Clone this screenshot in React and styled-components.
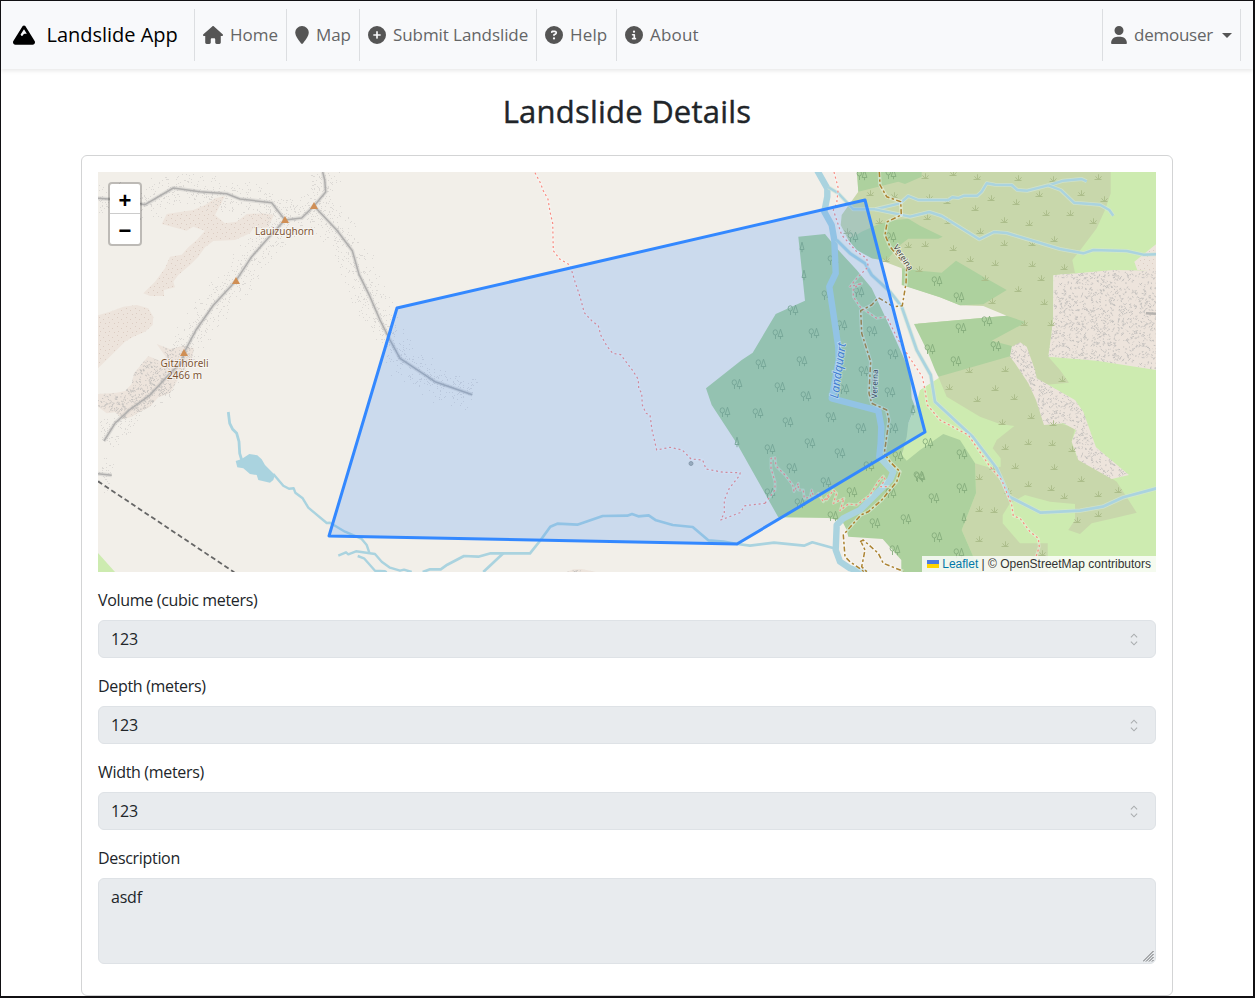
import React from "react";
import styled, { createGlobalStyle, css } from "styled-components";
import {
  FaMountain,
  FaHouse,
  FaLocationPin,
  FaCirclePlus,
  FaCircleQuestion,
  FaCircleInfo,
  FaUser,
} from "react-icons/fa6";

const GlobalStyle = createGlobalStyle`
  * { box-sizing: border-box; }
  body {
    margin: 0;
    background: #fff;
    color: #212529;
    font-family: "Open Sans", "Noto Sans", sans-serif;
    font-size: 16px;
    line-height: 24px;
  }
`;

const Page = styled.div`
  width: 1255px;
  height: 998px;
  overflow: hidden;
  border: solid #111013;
  border-width: 1px 2px 2px 1px;
  background: #fff;
`;

const Navbar = styled.nav`
  display: flex;
  align-items: center;
  height: 68px;
  padding: 0 12px 0 12px;
  background: #f8f9fb;
  box-shadow: 0 2px 4px rgba(0, 0, 0, 0.09);
`;

const Brand = styled.div`
  display: flex;
  align-items: center;
  width: 181px;
  height: 52px;
  color: #000;
  font-size: 20px;
  letter-spacing: -0.02px;
  white-space: nowrap;
  svg { width: 22px; height: 22px; margin-right: 11.5px; flex: none; }
`;

const NavItem = styled.div`
  display: flex;
  align-items: center;
  width: ${(p) => p.$width}px;
  height: 52px;
  padding-left: 7.5px;
  border-left: 1px solid #dcdee1;
  color: #646566;
  font-size: 17px;
  letter-spacing: ${(p) => p.$spacing || 0}px;
  white-space: nowrap;
  ${(p) => p.$last && css`
    margin-left: auto;
    border-right: 1px solid #dcdee1;
  `}
  svg {
    flex: none;
    height: 18px;
    width: ${(p) => p.$icon}px;
    margin-right: 7.5px;
    color: #555;
  }
`;

const Caret = styled.span`
  margin-left: 9px;
  border: 5px solid transparent;
  border-top-color: #555;
  border-bottom: 0;
`;

const Title = styled.h1`
  margin: 23px 0 24px;
  height: 39px;
  line-height: 39px;
  font-size: 31px;
  font-weight: 500;
  text-align: center;
  letter-spacing: 0.22px;
  -webkit-text-stroke: 0.4px currentColor;
`;

const Card = styled.main`
  width: 1092px;
  margin: 0 0 0 80px;
  padding: 16px 16px 15px;
  border: 1px solid #d3d4d5;
  border-radius: 6px;
`;

const MapBox = styled.section`
  position: relative;
  width: 1058px;
  height: 400px;
  margin-bottom: 16px;
  background: #f2efe9;
  overflow: hidden;
  > svg { display: block; }
`;

const ZoomControl = styled.div`
  position: absolute;
  left: 10px;
  top: 10px;
  border: 2px solid rgba(0, 0, 0, 0.22);
  border-radius: 4px;
  background: #fff;
  background-clip: padding-box;
`;

const ZoomButton = styled.div`
  display: flex;
  align-items: center;
  justify-content: center;
  width: 30px;
  height: 30px;
  padding-top: 3px;
  border-bottom: ${(p) => (p.$divided ? "1px solid #ccc" : "0")};
  color: #000;
  font: bold 22px/27px "Liberation Sans", sans-serif;
`;

const Attribution = styled.div`
  position: absolute;
  right: 0;
  bottom: 0;
  display: flex;
  align-items: center;
  height: 16px;
  padding: 0 5px;
  background: rgba(255, 255, 255, 0.8);
  color: #333;
  font: 12px/16px "Liberation Sans", sans-serif;
  white-space: pre;
  svg { margin-right: 3px; }
  span { color: #0078a8; }
`;

const Field = styled.div`
  margin-bottom: 16px;
`;

const Label = styled.label`
  display: block;
  margin-bottom: 8px;
  letter-spacing: -0.32px;
`;

const Control = styled.div`
  position: relative;
  display: flex;
  justify-content: space-between;
  align-items: ${(p) => (p.$tall ? "flex-start" : "center")};
  height: ${(p) => (p.$tall ? 86 : 38)}px;
  padding: 6px 17px 6px 12px;
  border: 1px solid #dee2e6;
  border-radius: 6px;
  background: #e8ebee;
  letter-spacing: -0.2px;
`;

const Grip = styled.svg`
  position: absolute;
  right: 1px;
  bottom: 1px;
`;

/* Deterministic noise for terrain textures */
function noise(seed) {
  let s = seed;
  return () => {
    s = (s * 16807) % 2147483647;
    return s / 2147483647;
  };
}

const WEST = [-8, -12];
const WEST_LOW = [-8, 188];
const MID = [292, -12];
const MID_LOW = [292, 188];
const VALLEY = [592, -12];
const VALLEY_LOW = [592, 188];
const EAST = [822, -12];
const EAST_LOW = [822, 188];

const parse = (sheet, text) =>
  text.trim().split(/\s+/).map((pair) => {
    const [x, y] = pair.split(",").map(Number);
    return [sheet[0] + x / 3, sheet[1] + y / 3];
  });
const pts = (sheet, text) => parse(sheet, text).map((p) => p.map((v) => v.toFixed(1)).join(",")).join(" ");

const Area = ({ s, p, fill }) => <polygon points={pts(s, p)} fill={fill} />;
const Line = ({ s, p, color, w, dash, o }) => (
  <polyline points={pts(s, p)} fill="none" stroke={color} strokeWidth={w} strokeDasharray={dash} opacity={o} strokeLinejoin="round" />
);
const Water = ({ s, p, w = 2.4, halo }) => (
  <>
    {halo && <Line s={s} p={p} color="#d3e6d6" w={w + 1.6} o={0.7} />}
    <Line s={s} p={p} color="#aad3df" w={w} />
  </>
);
const Footpath = ({ s, p }) => (
  <>
    <Line s={s} p={p} color="#fff" w={2.8} o={0.32} />
    <Line s={s} p={p} color="#f98a80" w={1.2} dash="2 2.8" />
  </>
);
const Track = ({ s, p }) => (
  <>
    <Line s={s} p={p} color="#fff" w={3.4} o={0.4} />
    <Line s={s} p={p} color="#ac8331" w={1.5} dash="5 2.4 2.4 2.4" />
  </>
);

const RIDGES = [
  "24,115 100,120 165,134 250,84 330,95 410,101 450,117 545,128 585,180 635,174 672,138 707,96 704,60 698,36",
  "672,138 740,210 787,272 807,343 840,410 870,480 900,540 930,595 1035,665 1147,704",
  "585,180 540,228 485,290 438,362 370,436 318,510 282,578 275,610 250,630 180,705 118,750 75,790 42,843",
  "24,941 65,946",
];

function stipple() {
  const r = noise(771);
  let d = "";
  RIDGES.forEach((ridge) => {
    const line = parse(WEST, ridge);
    for (let i = 1; i < line.length; i++) {
      const [ax, ay] = line[i - 1];
      const [bx, by] = line[i];
      const len = Math.hypot(bx - ax, by - ay);
      for (let k = 0; k < len * 2.6; k++) {
        const t = r();
        const off = (r() + r() - 1) * 20;
        const x = ax + (bx - ax) * t - ((by - ay) / len) * off;
        const y = ay + (by - ay) * t + ((bx - ax) / len) * off;
        d += `M${Math.round(x)} ${Math.round(y) + 0.5}h1`;
      }
    }
  });
  return d;
}

function rockTexture() {
  const r = noise(4242);
  let d = "";
  for (let i = 0; i < 820; i++) {
    const x = r() * 80;
    const y = r() * 80;
    d += `M${x.toFixed(1)} ${y.toFixed(1)}l${(r() * 4 - 2).toFixed(1)} ${(r() * 4 - 2).toFixed(1)}`;
  }
  return d;
}

const STIPPLE = stipple();
const ROCK = rockTexture();

const TREES = [
  [VALLEY, "429,300 411,405 310,450 264,523 372,518 456,494 546,513 213,613 336,602 609,582 523,632 508,395 489,232 515,44 603,42 603,230 740,362 720,566"],
  [VALLEY_LOW, "141,72 270,80 105,155 204,160 348,107 294,185 423,172 461,86 600,95 513,203 360,248 450,278 240,268 306,323 407,365 486,395 687,347 624,287 537,318 732,415 648,476 555,488 603,398 239,398 330,428 429,467 609,205 615,570 715,250"],
  [EAST, "117,411 123,505 201,484 228,558 108,604"],
  [EAST_LOW, "126,282 126,384 50,530 117,580 0,350"],
];
const SINGLE_TREES = [
  [VALLEY, "337,260 342,345"],
  [VALLEY_LOW, "141,247 668,150"],
  [EAST_LOW, "132,473"],
];
const GRASS = [
  [EAST, "16,48 100,40 172,50 295,53 400,58 535,50 28,110 80,122 214,114 287,126 358,102 482,99 553,118 164,144 379,159 451,159 22,172 85,183 253,180 328,189 520,183 181,213 403,237 253,249 337,249 16,252 100,264 151,297 226,309 337,312 433,321 196,354 364,354 295,387 217,422 373,426 392,490 312,488"],
  [VALLEY, "541,99 611,105 568,183 655,256 589,298 688,328 470,213"],
  [EAST_LOW, "148,30 256,27 427,57 88,81 226,84 172,117 283,111 247,187 334,168 400,188 256,261 325,246 397,249 457,267 286,318 403,320 220,320 176,351 325,372 482,357 394,384 433,408 535,402 264,393 176,447 223,450 535,462 472,480 178,537 256,552 367,578 595,390"],
];

const Symbols = ({ groups, href }) =>
  groups.flatMap(([sheet, text], g) =>
    parse(sheet, text).map(([x, y], i) => <use key={`${g}-${i}`} href={href} x={Math.round(x)} y={Math.round(y)} />)
  );

const MEADOW = "#cdebb0";
const HEATH = "#c8d7ab";
const FOREST = "#add19e";
const SCREE = "#ede4dc";
const LAND = "#f2efe9";

const MapLabel = ({ x, y, text, width, angle = 0, size = 10, color, italic }) => (
  <text
    x={x}
    y={y}
    transform={`rotate(${angle} ${x} ${y})`}
    textAnchor="middle"
    textLength={width}
    fontFamily="Noto Sans, sans-serif"
    fontSize={size}
    fontStyle={italic ? "italic" : "normal"}
    fill={color}
    stroke="rgba(255,255,255,.6)"
    strokeWidth="1.6"
    paintOrder="stroke"
  >
    {text}
  </text>
);

const Peak = ({ x, y }) => <path d={`M${x} ${y - 4}l4 7h-8z`} fill="#d08f55" />;

function Terrain() {
  return (
    <svg width="1058" height="400" viewBox="0 0 1058 400">
      <defs>
        <pattern id="rock" width="80" height="80" patternUnits="userSpaceOnUse">
          <rect width="80" height="80" fill={SCREE} />
          <path d={ROCK} stroke="#c5c2bf" strokeWidth="1" fill="none" />
        </pattern>
        <pattern id="scree" width="9" height="9" patternUnits="userSpaceOnUse">
          <rect width="9" height="9" fill={SCREE} />
          <path d="M1 1.5h1M5 3.5h1M2 6.5h1M7 7.5h1" stroke="#dccdc3" />
        </pattern>
        <g id="trees" fill="none" stroke="#86ad7d" strokeWidth=".9">
          <ellipse cx="-2.7" cy="-1.6" rx="2.2" ry="2.6" />
          <path d="M-2.5 1v4M2.5 -4.8l-2.4 7.3h4.8zM2.5 2.5v2.7" />
        </g>
        <path id="tree" d="M0 -4.8l-2 7.3h4zM0 2.5v2.7" fill="none" stroke="#86ad7d" strokeWidth=".9" />
        <path id="grass" d="M-3.5 2.5h7M.5 2.3v-5M0 2.3l-2.5 -3M1 2.3l2.5 -3" fill="none" stroke="#a9bb88" strokeWidth=".9" />
      </defs>

      <rect width="1058" height="400" fill={LAND} />
      <Area s={WEST_LOW} p="24,579 75,636 24,636" fill={MEADOW} />
      <Area s={WEST} fill="url(#scree)" p="405,108 375,115 345,135 310,150 230,162 215,192 290,212 310,200 345,212 320,240 295,262 275,284 240,290 225,325 195,365 160,400 180,408 222,408 222,390 255,382 250,365 265,345 300,315 325,290 345,262 370,243 435,240 480,220 490,205 535,202 552,165 520,160 470,162 440,185 405,190 375,165" />
      <Area s={WEST} fill="url(#scree)" p="24,466 60,455 100,440 140,435 175,445 190,470 188,495 165,515 130,530 105,545 80,570 55,595 24,625" />
      <Area s={WEST} fill="url(#rock)" p="200,552 240,567 282,557 312,565 305,600 275,640 240,700 205,712 180,740 150,755 125,770 100,778 75,757 50,760 24,740 24,702 80,698 105,693 125,672 132,640 175,588 210,603 228,592" />
      <Area s={MID_LOW} fill="url(#rock)" p="530,636 550,628 575,627 618,636" />

      <Area s={VALLEY} fill={MEADOW} p="1200,36 1400,36 1400,1236 800,1236 700,1000 635,890 650,800 675,745 690,690 745,650 1000,600 1100,500" />
      <Area s={VALLEY} fill={HEATH} p="501,36 1262,36 1262,100 1245,150 1220,205 1175,265 1147,300 1155,340 1090,346 1090,480 1075,590 1110,630 1137,668 1060,675 1040,700 1062,790 1095,785 1155,805 1145,845 1160,890 1220,925 1280,965 1340,1058 1290,1070 1205,1090 1170,1122 1135,1110 1155,1080 1155,1032 1080,1025 1005,1005 960,1030 938,1065 938,1090 990,1150 1073,1150 1073,1236 880,1236 850,1190 815,1110 858,1000 855,910 905,925 932,920 932,895 908,865 920,840 973,798 930,792 870,770 770,710 745,650 640,375 545,295 475,240 452,195 455,165 505,95" />
      <Area s={VALLEY} fill={LAND} p="640,375 750,412 810,436 880,438 950,467 672,492 750,640 745,655 690,690 665,700 660,640 590,480 500,330 440,265 475,240 545,295 570,300 635,325" />
      <Area s={VALLEY} fill={FOREST} p="501,36 695,36 695,50 645,72 625,65 505,95" />
      <Area s={VALLEY} fill={FOREST} p="475,240 515,215 560,195 600,182 655,176 690,197 758,230 745,236 655,236 630,255 590,300 545,295 500,270" />
      <Area s={VALLEY} fill={FOREST} p="637,325 690,332 755,338 798,302 880,350 950,390 880,433 810,436 750,412 635,375" />
      <Area s={VALLEY} fill={FOREST} p="672,492 950,467 1008,487 905,542 965,558 973,585 850,620 745,650 735,630 715,580" />
      <Area s={VALLEY} fill={FOREST} p="325,230 405,222 440,265 500,330 545,385 590,480 640,590 660,640 665,715 675,740 655,790 650,830 640,870 635,885 650,902 690,870 760,822 810,840 855,910 858,1000 815,1110 850,1190 880,1236 634,1236 634,1200 578,1137 475,1130 470,1110 460,1090 440,1080 415,1074 265,1072 140,850 65,735 48,685 155,600 188,578 257,462 345,422" />
      <Area s={EAST} fill="url(#scree)" p="643,305 708,253 708,335 652,330" />
      <Area s={EAST} fill="url(#rock)" p="402,346 580,330 708,332 708,630 530,602 385,590 400,480" />
      <Area s={EAST} fill="url(#rock)" p="275,560 300,547 320,560 345,630 350,655 465,720 490,755 528,862 627,945 575,957 475,900 455,845 468,810 430,790 372,795 348,720 325,670 285,610 270,590" />

      <Symbols groups={TREES} href="#trees" />
      <Symbols groups={SINGLE_TREES} href="#tree" />
      <Symbols groups={GRASS} href="#grass" />

      <path d={STIPPLE} stroke="#bab8b5" strokeWidth="1" opacity=".38" />
      {RIDGES.map((r) => (
        <g key={r}>
          <Line s={WEST} p={r} color="#aaa" w={4} o={0.28} />
          <Line s={WEST} p={r} color="#b0afae" w={1.5} />
        </g>
      ))}
      <Line s={EAST} p="678,460 708,461" color="#b5b2af" w={2.5} />

      <Water s={WEST_LOW} p="415,156 419,190 428,208 440,220 447,245 449,280 455,300" w={2.8} />
      <Area s={WEST_LOW} fill="#aad3df" p="437,303 455,297 478,282 502,286 515,298 525,315 555,345 550,360 540,368 505,360 500,345 480,342 460,325 442,322" />
      <Water s={WEST_LOW} p="550,342 580,377 597,386 611,385 616,398 638,415 655,443 710,489 720,488 765,515 800,530 815,537 830,555 838,578" />
      <Water s={WEST_LOW} p="745,587 768,577 775,583 798,574 855,582 875,605 900,623 930,632 942,629 965,636" />
      <Water s={WEST_LOW} p="803,588 822,595 855,632 885,634 890,637" />
      <Water s={MID_LOW} p="98,636 120,628 152,628 172,614 222,588 265,590 302,580 420,580 452,540 481,500 502,491 562,494 638,468 712,467 726,462 745,469 776,466 798,481 848,495 908,501 955,541 1000,545 1042,552 1080,557 1152,548 1242,557 1267,547 1332,565" w={2.7} />
      <Water s={MID_LOW} p="340,580 280,636" w={2.7} />
      <Water s={VALLEY} p="382,32 412,85 412,110 403,155 425,195 433,240 437,340 418,380 430,460 445,560 446,600 425,715 500,735 565,752 574,800 572,850 568,890 610,935 600,960 510,1050 460,1075 440,1095 437,1170 450,1205 480,1225 530,1240" w={6.4} />
      <Water halo s={VALLEY} p="415,82 445,100 490,148 555,148 630,130 655,108 685,120 775,120 787,112 805,114 823,107 862,107 875,95 890,70 915,74 965,75 982,90 1012,92 1075,76 1120,62 1175,57 1190,64" />
      <Water halo s={EAST} p="385,76 422,90 462,128 540,134 568,150 580,167" />
      <Water halo s={VALLEY} p="555,148 660,170 718,156 755,168 868,238 912,216 950,219 1110,267 1180,280 1210,270 1310,273 1360,284 1400,283" />
      <Water halo s={VALLEY} p="440,240 480,280 525,310 545,345 600,395 635,440 680,570 722,645 735,725 848,830 920,925 958,1010 1052,1058 1170,1052 1238,1040 1300,1012 1400,985" w={2.7} />

      <Footpath s={MID} p="435,38 451,68 460,92 474,118 480,155 488,190 490,272 510,298 540,315 555,365 570,410 583,458 605,482 625,497 632,525 650,557 668,580 692,584 710,608 727,630 745,658 746,685 755,700 757,735 768,760 780,765 786,810 800,870 840,862 877,870 903,897 938,900 948,927 1000,937 1050,938 1050,945 1018,985 1003,1020 1003,1060 992,1080 1050,1058 1065,1037 1125,1030" />
      <Footpath s={VALLEY_LOW} p="225,430 255,390 255,365 243,325 243,295 255,293 258,318 285,345 308,375 312,395 325,370 325,390 340,390 343,415 360,412 365,390 372,415 385,400 400,425 415,405 410,420 430,390 440,400 430,430 462,415 450,452 475,432 500,435 540,405 565,365 580,348 585,358 572,380 600,380" />
      <Footpath s={VALLEY} p="432,36 445,85 440,130 430,150 455,225 500,275 530,295 535,320 500,355 480,380 515,370 490,385 490,410 510,440 560,475 590,470 625,540 660,595 697,650 705,690 712,735 750,780 835,825 900,920 935,960 965,1035 970,1068 990,1075 1020,1115 1045,1135 1048,1160 1038,1190" />
      <Track s={VALLEY} p="568,36 570,75 590,110 632,125 634,165 592,185 585,225 600,260 650,320 648,370 637,437 610,440 565,413 545,435 512,452 515,520 542,605 540,640 537,700 545,730 590,750 597,780 583,880 600,905 630,935 620,965 575,1020 535,1055 512,1065 460,1125 465,1190 480,1205 530,1240" />
      <Track s={VALLEY_LOW} p="512,543 525,570 515,620 535,640" />
      <Track s={VALLEY_LOW} p="510,545 520,540 565,580 580,610 640,634" />
      <Line s={WEST_LOW} p="24,364 433,637" color="#666" w={1.8} dash="5 3" />
      <circle cx="593" cy="291.5" r="2" fill="#b1b4ae" stroke="#92968f" strokeWidth=".8" />

      <Peak x={187} y={48} />
      <Peak x={216} y={34} />
      <Peak x={138} y={109} />
      <Peak x={86} y={181} />
      <MapLabel x={186.5} y={62.5} width={59} text="Lauizughorn" color="#7d5433" />
      <MapLabel x={86.5} y={195} width={48} text="Gitzihöreli" color="#7d5433" />
      <MapLabel x={86.5} y={207} width={35} text="2466 m" color="#7d5433" />
      <MapLabel x={744} y={199} width={56} angle={-82} size={12} italic text="Landquart" color="#4a80c4" />
      <MapLabel x={779.5} y={212} width={29} angle={-88} size={8} text="Vereina" color="#333" />
      <MapLabel x={803} y={87} width={29} angle={56} size={8} text="Vereina" color="#333" />

      <polygon points="299,136 767,28 827,260 639,372 231,364" fill="#3388ff" fillOpacity=".2" stroke="#3388ff" strokeWidth="3" strokeLinejoin="round" />
    </svg>
  );
}

function Spinner() {
  return (
    <svg width="8" height="13" viewBox="0 0 9 14" fill="none" stroke="#a9acae" strokeWidth="1.2">
      <path d="M1 4.5L4.5 1L8 4.5M1 9.5L4.5 13L8 9.5" />
    </svg>
  );
}

const NUMBERS = [
  ["Volume (cubic meters)", "123"],
  ["Depth (meters)", "123"],
  ["Width (meters)", "123"],
];

export default function App() {
  return (
    <>
      <GlobalStyle />
      <Page>
        <Navbar>
          <Brand><FaMountain />Landslide App</Brand>
          <NavItem $width={92} $icon={20}><FaHouse />Home</NavItem>
          <NavItem $width={73} $icon={14} $spacing={-0.1}><FaLocationPin />Map</NavItem>
          <NavItem $width={177} $icon={18} $spacing={-0.08}><FaCirclePlus />Submit Landslide</NavItem>
          <NavItem $width={80} $icon={18} $spacing={0.15}><FaCircleQuestion />Help</NavItem>
          <NavItem $width={100} $icon={18} $spacing={0.2}><FaCircleInfo />About</NavItem>
          <NavItem $width={139} $icon={16} $spacing={-0.25} $last><FaUser />demouser<Caret /></NavItem>
        </Navbar>
        <Title>Landslide Details</Title>
        <Card>
          <MapBox>
            <Terrain />
            <ZoomControl>
              <ZoomButton $divided>+</ZoomButton>
              <ZoomButton>−</ZoomButton>
            </ZoomControl>
            <Attribution>
              <svg width="12" height="8" viewBox="0 0 12 8">
                <path fill="#4c7be1" d="M0 0h12v4H0z" />
                <path fill="#ffd500" d="M0 4h12v4H0z" />
              </svg>
              <span>Leaflet</span> | © OpenStreetMap contributors
            </Attribution>
          </MapBox>
          {NUMBERS.map(([label, value]) => (
            <Field key={label}>
              <Label>{label}</Label>
              <Control>{value}<Spinner /></Control>
            </Field>
          ))}
          <Field>
            <Label>Description</Label>
            <Control $tall>
              asdf
              <Grip width="11" height="11" viewBox="0 0 11 11" stroke="#66686b" strokeWidth="1">
                <path d="M0 10.5L10.5 0M3 10.5L10.5 3M6 10.5L10.5 6M9 10.5L10.5 9" />
              </Grip>
            </Control>
          </Field>
        </Card>
      </Page>
    </>
  );
}
